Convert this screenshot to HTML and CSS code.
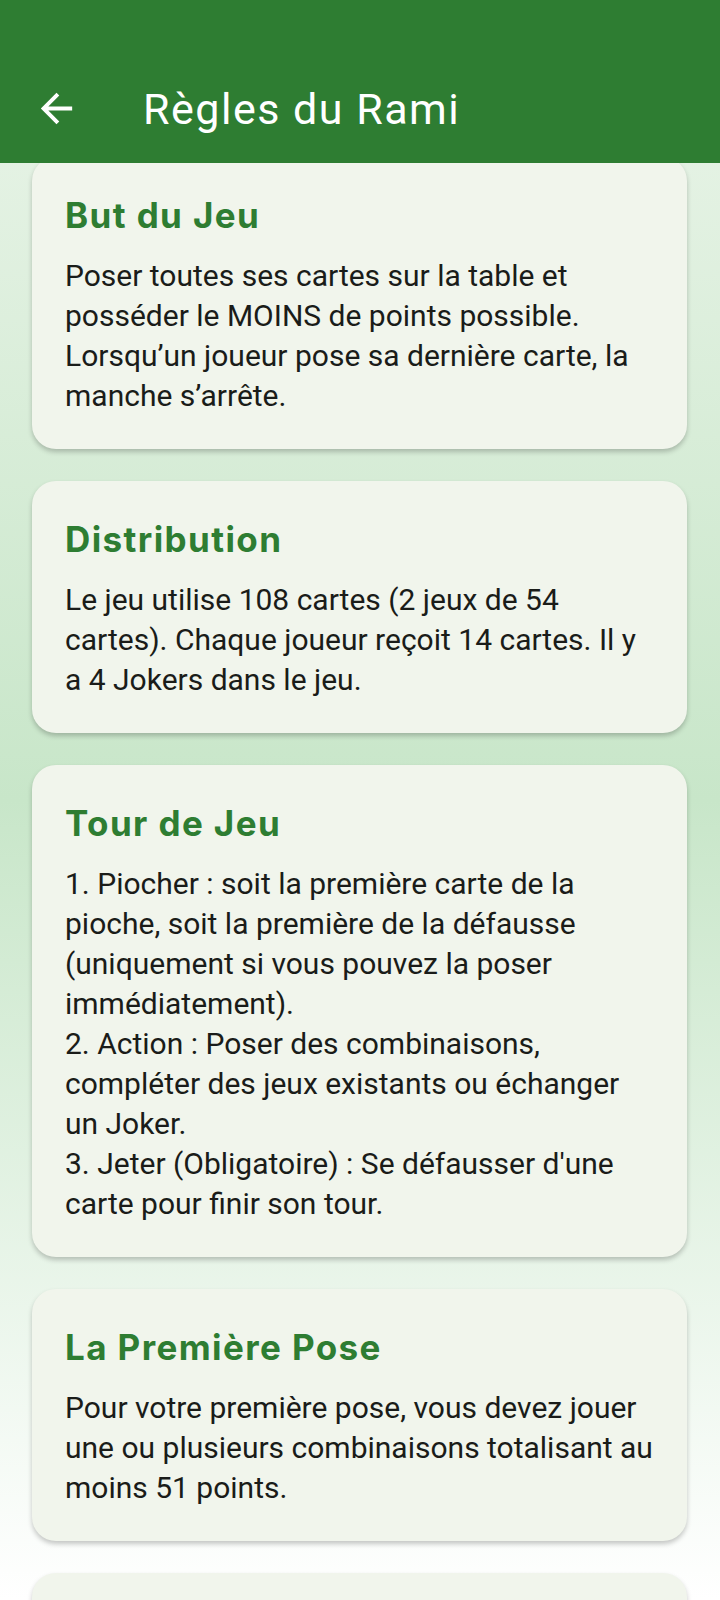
FILE: index.html
```html
<!DOCTYPE html>
<html lang="fr">
<head>
    <meta charset="UTF-8">
    <meta name="viewport" content="width=device-width, initial-scale=1.0">
    <title>Règles du Rami</title>
    <link rel="stylesheet" href="styles.css">
</head>
<body>
    <header class="app-bar">
        <button class="back-button" aria-label="Retour">
            <svg viewBox="0 0 24 24" width="47" height="47"><path d="M20 11H7.83l5.59-5.59L12 4l-8 8 8 8 1.41-1.41L7.83 13H20v-2z" fill="#fff"/></svg>
        </button>
        <h1 class="app-title">Règles du Rami</h1>
    </header>

    <main class="rules">
        <div class="rules-list">
            <section class="rule-card">
                <h2>But du Jeu</h2>
                <p>Poser toutes ses cartes sur la table et posséder le MOINS de points possible. Lorsqu’un joueur pose sa dernière carte, la manche s’arrête.</p>
            </section>

            <section class="rule-card">
                <h2>Distribution</h2>
                <p>Le jeu utilise 108 cartes (2 jeux de 54 cartes). Chaque joueur reçoit 14 cartes. Il y a 4 Jokers dans le jeu.</p>
            </section>

            <section class="rule-card">
                <h2>Tour de Jeu</h2>
                <p>1. Piocher : soit la première carte de la pioche, soit la première de la défausse (uniquement si vous pouvez la poser immédiatement).<br>2. Action : Poser des combinaisons, compléter des jeux existants ou échanger un Joker.<br>3. Jeter (Obligatoire) : Se défausser d'une carte pour finir son tour.</p>
            </section>

            <section class="rule-card">
                <h2>La Première Pose</h2>
                <p>Pour votre première pose, vous devez jouer une ou plusieurs combinaisons totalisant au moins 51 points.</p>
            </section>

            <section class="rule-card rule-card-empty"></section>
        </div>
    </main>
</body>
</html>
```

FILE: styles.css
```css
* {
    box-sizing: border-box;
}
body {
    margin: 0;
    min-height: 1600px;
    font-family: Roboto, "Noto Sans", sans-serif;
    background: linear-gradient(to bottom, #ebf5ea 0%, #c8e6c9 50%, #ffffff 100%);
    overflow: hidden;
}
.app-bar {
    position: relative;
    z-index: 2;
    height: 163px;
    padding: 54px 0 0 33px;
    background-color: #2e7d32;
    display: flex;
    align-items: center;
}
.back-button {
    width: 47px;
    height: 47px;
    padding: 0;
    border: none;
    background: none;
    display: flex;
    align-items: center;
    justify-content: center;
}
.app-title {
    margin: 0 0 0 63px;
    color: #fff;
    font-size: 43px;
    font-weight: 400;
    letter-spacing: 1.5px;
}
.rules {
    height: 1437px;
    overflow: hidden;
}
.rules-list {
    margin-top: -6px;
    padding: 0 33px 0 32px;
    display: flex;
    flex-direction: column;
    gap: 32px;
}
.rule-card {
    background-color: #f1f5ec;
    border-radius: 24px;
    padding: 36px 32px 33px 33px;
    box-shadow: 0 3px 5px rgba(0, 0, 0, 0.22);
}
.rule-card h2 {
    margin: 0 0 19px;
    color: #2e7d32;
    font-family: Inter, Roboto, sans-serif;
    font-size: 35px;
    line-height: 44px;
    font-weight: 700;
    letter-spacing: 1.4px;
}
.rule-card p {
    margin: 0;
    color: #1a1c19;
    font-size: 30px;
    line-height: 40px;
}
.rule-card-empty {
    height: 220px;
}
```
